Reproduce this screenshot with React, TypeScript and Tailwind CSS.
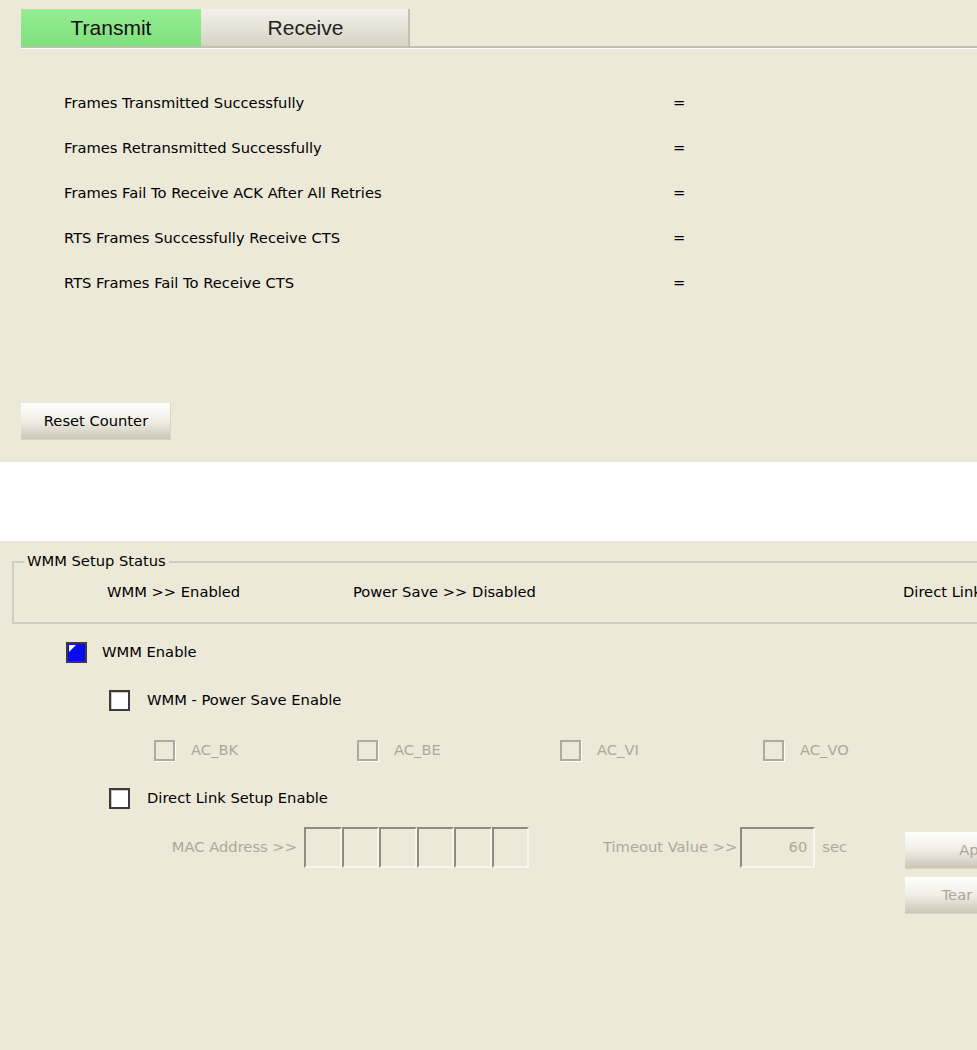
import React from "react";

// Compteurs affichés dans l'onglet Transmit
const rows = [
  "Frames Transmitted Successfully",
  "Frames Retransmitted Successfully",
  "Frames Fail To Receive ACK After All Retries",
  "RTS Frames Successfully Receive CTS",
  "RTS Frames Fail To Receive CTS",
];

const acList = [
  { label: "AC_BK", ml: "ml-[154px]" },
  { label: "AC_BE", ml: "ml-[166px]" },
  { label: "AC_VI", ml: "ml-[166px]" },
  { label: "AC_VO", ml: "ml-[166px]" },
];

const CheckBox: React.FC<{ checked?: boolean; disabled?: boolean }> = ({ checked, disabled }) => {
  if (disabled) {
    return (
      <span className="w-[21px] h-[21px] shrink-0 border-2 border-[#AEAB9C] bg-[#ECE9D8] shadow-[1px_1px_0_#fff]" />
    );
  }
  if (checked) {
    return (
      <span className="w-[21px] h-[21px] shrink-0 border-2 border-[#3B3B3B] bg-[#0A0AF0] relative">
        <svg className="absolute left-[1px] top-[1px]" width="8" height="8" viewBox="0 0 8 8">
          <path d="M0 0 H7 L0 7 Z" fill="#fff" />
        </svg>
      </span>
    );
  }
  return (
    <span className="w-[21px] h-[21px] shrink-0 border-2 border-[#3B3B3B] bg-white shadow-[inset_1px_1px_0_#C9C6BA]" />
  );
};

const XpButton: React.FC<{ label: string; className?: string; disabled?: boolean }> = ({
  label,
  className,
  disabled,
}) => (
  <div
    className={`shrink-0 flex items-center justify-center bg-linear-to-b from-[#FFFFFF] via-[#EFEDE4] to-[#C9C5B5] shadow-[inset_-1px_-1px_0_#D8D4C6] ${
      disabled ? "text-[#ACA899]" : "text-black"
    } ${className ?? ""}`}
  >
    {label}
  </div>
);

const App: React.FC = () => {
  return (
    <div className="w-[977px] h-[1050px] overflow-hidden bg-white flex flex-col whitespace-nowrap font-['DejaVu_Sans',sans-serif] text-[14.7px] text-black">
      {/* panneau statistiques */}
      <div className="h-[462px] shrink-0 bg-[#ECE9D8] flex flex-col">
        <div className="mt-[9px] ml-[21px] flex flex-col">
          <div className="flex h-[37px] font-['Liberation_Sans',sans-serif] text-[21px]">
            <div className="w-[180px] flex items-center justify-center bg-linear-to-b from-[#95EE93] to-[#80DF7E] text-[#111]">
              Transmit
            </div>
            <div className="w-[209px] flex items-center justify-center bg-linear-to-b from-[#F3F1EA] to-[#D7D3C4] shadow-[inset_-2px_0_0_#C3BFB0] text-[#222]">
              Receive
            </div>
          </div>
          <div className="h-[2px] bg-[#C3BFB2]" />
          <div className="h-[1px] bg-white" />
        </div>

        <div className="mt-[32px] flex flex-col">
          {rows.map((r) => (
            <div key={r} className="h-[45px] flex items-center">
              <span className="ml-[64px] w-[609px] shrink-0">{r}</span>
              <span className="shrink-0">=</span>
            </div>
          ))}
        </div>

        <XpButton label="Reset Counter" className="mt-[97px] ml-[21px] w-[150px] h-[37px]" />
      </div>

      <div className="h-[79px] shrink-0 bg-white" />

      {/* panneau WMM */}
      <div className="flex-1 bg-[#ECE9D8] flex flex-col">
        <div className="mt-[20px] ml-[12px] w-[1100px] shrink-0 h-[63px] border-2 border-r-0 border-[#D0CDBF] relative flex items-center">
          <span className="absolute left-[10px] top-[-12px] px-[3px] bg-[#ECE9D8] leading-[20px]">
            WMM Setup Status
          </span>
          <span className="ml-[93px] w-[246px] shrink-0">WMM &gt;&gt; Enabled</span>
          <span className="w-[550px] shrink-0">Power Save &gt;&gt; Disabled</span>
          <span className="shrink-0">Direct Link Setup &gt;&gt; Disabled</span>
        </div>

        <div className="mt-[18px] ml-[66px] flex items-center h-[21px]">
          <CheckBox checked />
          <span className="ml-[15px]">WMM Enable</span>
        </div>

        <div className="mt-[27px] ml-[109px] flex items-center h-[21px]">
          <CheckBox />
          <span className="ml-[17px]">WMM - Power Save Enable</span>
        </div>

        <div className="mt-[29px] flex items-center h-[21px] text-[#ACA899]">
          {acList.map((a) => (
            <div key={a.label} className={`flex items-center shrink-0 ${a.ml}`}>
              <CheckBox disabled />
              <span className="ml-[16px] w-[0px] whitespace-nowrap">{a.label}</span>
            </div>
          ))}
        </div>

        <div className="mt-[27px] ml-[109px] flex items-center h-[21px]">
          <CheckBox />
          <span className="ml-[17px]">Direct Link Setup Enable</span>
        </div>

        <div className="mt-[18px] flex items-start w-[1100px] shrink-0">
          <div className="flex items-center h-[41px] text-[#ACA899] shrink-0">
            <span className="w-[297px] text-right shrink-0">MAC Address &gt;&gt;</span>
            <div className="ml-[7px] flex shrink-0">
              {[0, 1, 2, 3, 4, 5].map((i) => (
                <div
                  key={i}
                  className="w-[37.5px] h-[41px] shrink-0 border-2 border-t-[#8F8C7F] border-l-[#8F8C7F] border-b-[#F7F6F0] border-r-[#F7F6F0]"
                />
              ))}
            </div>
            <span className="ml-[74px] shrink-0">Timeout Value &gt;&gt;</span>
            <div className="ml-[3px] w-[75px] h-[41px] shrink-0 border-2 border-t-[#8F8C7F] border-l-[#8F8C7F] border-b-[#F7F6F0] border-r-[#F7F6F0] flex items-center justify-end pr-[6px]">
              60
            </div>
            <span className="ml-[7px] shrink-0">sec</span>
          </div>
          <div className="ml-[58px] mt-[5px] flex flex-col gap-[8px] text-[#ACA899] shrink-0">
            <XpButton label="Apply" className="w-[150px] h-[37px]" disabled />
            <XpButton label="Tear Down" className="w-[150px] h-[37px]" disabled />
          </div>
        </div>
      </div>
    </div>
  );
};

export default App;
